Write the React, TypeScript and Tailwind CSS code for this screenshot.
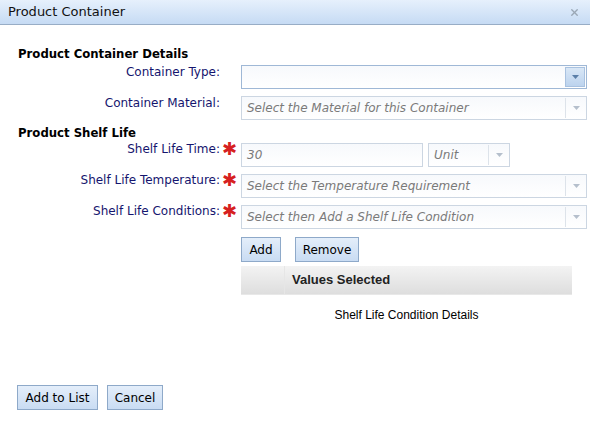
import { X } from 'lucide-react';

const labelCls = "text-right text-[12px] leading-[12px] text-[#15156e] pr-[2px]";

function Arrow({ dark }: { dark?: boolean }) {
  return (
    <svg width="7" height="4" viewBox="0 0 7 4" className="block">
      <path d="M0 0h7L3.5 4z" fill={dark ? "#5b7fa8" : "#b5bfcc"} />
    </svg>
  );
}

function Select({ placeholder, active }: { placeholder?: string; active?: boolean }) {
  return (
    <div
      className={
        "flex h-[24px] border bg-gradient-to-b from-[#f7f9fc] to-white " +
        (active ? "border-[#9fb8d6]" : "border-[#ccd6e2]")
      }
    >
      <div className="flex-1 flex items-center px-[5px] italic text-[12px] text-[#7a7a7a] truncate">
        {placeholder}
      </div>
      {active ? (
        <div className="w-[20px] my-[1px] mr-[1px] flex items-center justify-center bg-gradient-to-b from-[#d9e7f6] to-[#bcd3ee] border border-[#a9c2e0]">
          <Arrow dark />
        </div>
      ) : (
        <div className="w-[21px] flex items-center justify-center border-l border-[#dde3ea] my-[1px]">
          <Arrow />
        </div>
      )}
    </div>
  );
}

function Star() {
  return <span className="text-[#d62020] text-[18px] leading-[12px] font-bold">✱</span>;
}

function Btn({ children, className }: { children: React.ReactNode; className?: string }) {
  return (
    <button
      className={
        "h-[25px] border border-[#8ea9c9] bg-gradient-to-b from-[#e4eefa] to-[#c9dcf3] text-[12px] text-black " +
        (className ?? "")
      }
    >
      {children}
    </button>
  );
}

const headCls = "pl-[18px] text-[13px] font-bold text-black leading-[14px]";
const condensed = { fontFamily: '"DejaVu Sans Condensed", "DejaVu Sans", sans-serif' };

export default function App() {
  return (
    <div
      className="w-[590px] h-[429px] bg-white flex flex-col"
      style={{ fontFamily: '"DejaVu Sans", sans-serif' }}
    >
      <div className="h-[25px] flex items-center justify-between pl-[8px] pr-[10px] bg-gradient-to-b from-[#e6f0fc] to-[#c6dbf4] border-b border-[#98adc6]">
        <span className="text-[13px] text-[#111]">Product Container</span>
        <X className="w-[11px] h-[11px] text-[#9aa7b5]" strokeWidth={3} />
      </div>

      <div className="flex-1 flex flex-col pt-[22px]">
        <div className={headCls} style={condensed}>Product Container Details</div>

        <div className="grid grid-cols-[222px_19px_1fr] pr-[3px] mt-[4px] gap-y-[7px] items-start">
          <div className={labelCls + " pt-[1px]"}>Container Type:</div>
          <div />
          <Select active />
          <div className={labelCls + " pt-[1px]"}>Container Material:</div>
          <div />
          <Select placeholder="Select the Material for this Container" />
        </div>

        <div className={headCls + " mt-[6px]"} style={condensed}>Product Shelf Life</div>

        <div className="grid grid-cols-[222px_19px_1fr] pr-[3px] mt-[3px] gap-y-[7px] items-start">
          <div className={labelCls}>Shelf Life Time:</div>
          <Star />
          <div className="flex gap-[5px]">
            <div className="w-[182px] h-[24px] border border-[#ccd6e2] bg-gradient-to-b from-[#f7f9fc] to-white flex items-center px-[5px] italic text-[12px] text-[#7a7a7a]">
              30
            </div>
            <div className="w-[82px]">
              <Select placeholder="Unit" />
            </div>
          </div>
          <div className={labelCls}>Shelf Life Temperature:</div>
          <Star />
          <Select placeholder="Select the Temperature Requirement" />
          <div className={labelCls}>Shelf Life Conditions:</div>
          <Star />
          <Select placeholder="Select then Add a Shelf Life Condition" />
        </div>

        <div className="pl-[241px] mt-[8px] flex gap-[14px]">
          <Btn className="w-[40px]">Add</Btn>
          <Btn className="w-[64px]">Remove</Btn>
        </div>

        <div className="ml-[241px] mr-[18px] mt-[4px] h-[29px] flex bg-gradient-to-b from-[#f3f3f3] to-[#dedede] border-b border-[#e8e8e8]">
          <div className="w-[44px] border-r border-[#e6e6e6]" />
          <div
            className="flex items-center pl-[7px] text-[13px] font-bold text-[#222]"
            style={{ fontFamily: '"Liberation Sans", Arial, sans-serif' }}
          >
            Values Selected
          </div>
        </div>

        <div
          className="ml-[241px] mr-[18px] mt-[11px] text-center text-[12px] text-black"
          style={{ fontFamily: '"Liberation Sans", Arial, sans-serif' }}
        >
          Shelf Life Condition Details
        </div>

        <div className="mt-auto mb-[19px] pl-[17px] flex gap-[9px]">
          <Btn className="w-[81px]">Add to List</Btn>
          <Btn className="w-[56px]">Cancel</Btn>
        </div>
      </div>
    </div>
  );
}
